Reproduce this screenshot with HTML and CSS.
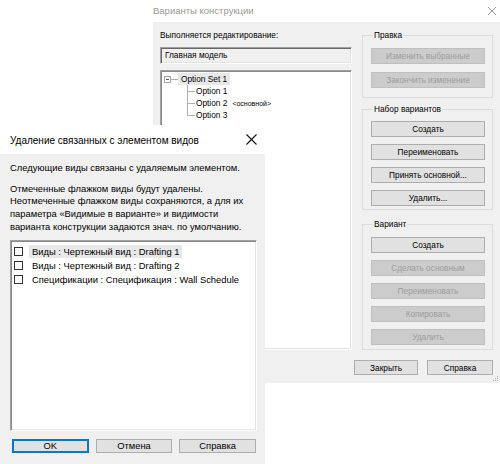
FILE: index.html
```html
<!DOCTYPE html>
<html lang="ru">
<head>
<meta charset="utf-8">
<title>Варианты конструкции</title>
<link rel="stylesheet" href="styles.css">
</head>
<body>
<div class="desk">
  <section class="win back">
    <header class="back-title">
      <span class="back-title-text">Варианты конструкции</span>
      <svg class="back-close" width="10" height="10" viewBox="0 0 10 10"><path d="M1 1L9 9M9 1L1 9" stroke="#9a9a9a" stroke-width="1"/></svg>
    </header>
    <div class="back-body">
      <div class="back-main">
        <div class="left-col">
          <div class="lbl">Выполняется редактирование:</div>
          <div class="field">Главная модель</div>
          <div class="tree">
            <div class="tree-row">
              <span class="expander"></span><span class="stub"></span><span class="node sel">Option Set 1</span>
            </div>
            <div class="tree-children">
              <div class="tree-row"><span class="branch"></span><span class="node">Option 1</span></div>
              <div class="tree-row"><span class="branch"></span><span class="node">Option 2<span class="primary">&lt;основной&gt;</span></span></div>
              <div class="tree-row last"><span class="branch"></span><span class="node">Option 3</span></div>
            </div>
          </div>
        </div>
        <div class="right-col">
          <fieldset class="grp grp-edit">
            <legend>Правка</legend>
            <div class="grp-btns">
              <button class="btn dis">Изменить выбранные</button>
              <button class="btn dis">Закончить изменение</button>
            </div>
          </fieldset>
          <fieldset class="grp grp-set">
            <legend>Набор вариантов</legend>
            <div class="grp-btns">
              <button class="btn">Создать</button>
              <button class="btn">Переименовать</button>
              <button class="btn">Принять основной...</button>
              <button class="btn">Удалить...</button>
            </div>
          </fieldset>
          <fieldset class="grp grp-opt">
            <legend>Вариант</legend>
            <div class="grp-btns">
              <button class="btn">Создать</button>
              <button class="btn dis">Сделать основным</button>
              <button class="btn dis">Переименовать</button>
              <button class="btn dis">Копировать</button>
              <button class="btn dis">Удалить</button>
            </div>
          </fieldset>
        </div>
      </div>
      <div class="back-foot">
        <button class="btn foot-close">Закрыть</button>
        <button class="btn foot-help">Справка</button>
      </div>
      <svg class="grip" width="6" height="6" viewBox="0 0 6 6">
        <rect x="4" y="0" width="1" height="1" fill="#b5b5b5"/>
        <rect x="2" y="2" width="1" height="1" fill="#b5b5b5"/>
        <rect x="4" y="2" width="1" height="1" fill="#b5b5b5"/>
        <rect x="0" y="4" width="1" height="1" fill="#b5b5b5"/>
        <rect x="2" y="4" width="1" height="1" fill="#b5b5b5"/>
        <rect x="4" y="4" width="1" height="1" fill="#b5b5b5"/>
      </svg>
    </div>
  </section>

  <section class="win front">
    <header class="front-title">
      <span class="front-title-text">Удаление связанных с элементом видов</span>
      <svg class="front-close" width="11" height="11" viewBox="0 0 11 11"><path d="M0.5 0.5L10.5 10.5M10.5 0.5L0.5 10.5" stroke="#111" stroke-width="1.1"/></svg>
    </header>
    <div class="front-body">
      <p class="msg1">Следующие виды связаны с удаляемым элементом.</p>
      <p class="msg2">Отмеченные флажком виды будут удалены.<br>Неотмеченные флажком виды сохраняются, а для их<br>параметра «Видимые в варианте» и видимости<br>варианта конструкции задаются знач. по умолчанию.</p>
      <div class="listbox">
        <div class="item"><span class="cb"></span><span class="item-text sel">Виды : Чертежный вид : Drafting 1</span></div>
        <div class="item"><span class="cb"></span><span class="item-text">Виды : Чертежный вид : Drafting 2</span></div>
        <div class="item"><span class="cb"></span><span class="item-text">Спецификации : Спецификация : Wall Schedule</span></div>
      </div>
      <div class="front-btns">
        <button class="btn fbtn ok">OK</button>
        <button class="btn fbtn">Отмена</button>
        <button class="btn fbtn">Справка</button>
      </div>
    </div>
  </section>
</div>
</body>
</html>
```

FILE: styles.css
```css
html, body {
  margin: 0;
  padding: 0;
  background: #ffffff;
}
body {
  font-family: "Liberation Sans", Arial, sans-serif;
  color: #000;
}
.desk {
  position: relative;
  width: 500px;
  height: 464px;
  overflow: hidden;
  background: #ffffff;
}
.win {
  position: absolute;
  display: flex;
  flex-direction: column;
  box-sizing: border-box;
}

/* ---------- back window ---------- */
.back {
  left: 153px;
  top: 0;
  width: 347px;
  height: 383px;
}
.back-title {
  height: 22px;
  flex: none;
  display: flex;
  align-items: center;
  justify-content: space-between;
  background: #fff;
  padding: 0 3px 0 0;
}
.back-title-text {
  font-size: 9.5px;
  color: #9a9a9a;
  margin-top: -1px;
}
.back-close {
  display: block;
  margin-top: -1px;
}
.back-body {
  flex: 1;
  position: relative;
  background: #f0f0f0;
  font-size: 8.3px;
  padding: 8px 7px 0 7px;
  display: flex;
  flex-direction: column;
}
.back-main {
  display: flex;
  gap: 10px;
}
.left-col {
  width: 192px;
  display: flex;
  flex-direction: column;
}
.lbl {
  line-height: 10px;
  height: 10px;
}
.field {
  margin-top: 7px;
  height: 17px;
  box-sizing: border-box;
  background: #f0f0f0;
  border-top: 1px solid #a0a0a0;
  border-left: 1px solid #a0a0a0;
  border-right: 1px solid #ffffff;
  border-bottom: 1px solid #ffffff;
  box-shadow: inset 1px 1px 0 #696969, inset -1px -1px 0 #e3e3e3;
  line-height: 15px;
  padding-left: 4px;
}
.tree {
  margin-top: 6px;
  height: 280px;
  box-sizing: border-box;
  background: #fff;
  border-top: 1px solid #a0a0a0;
  border-left: 1px solid #a0a0a0;
  border-right: 1px solid #ffffff;
  border-bottom: 1px solid #ffffff;
  box-shadow: inset 1px 1px 0 #8a8a8a, inset -1px -1px 0 #e3e3e3;
  padding: 2px 2px 0 3px;
}
.tree-row {
  display: flex;
  align-items: center;
  height: 12px;
  line-height: 12px;
}
.expander {
  width: 7px;
  height: 7px;
  box-sizing: border-box;
  border: 1px solid #a5a5a5;
  background: linear-gradient(#5a5a5a, #5a5a5a) center / 3px 1px no-repeat #fff;
  flex: none;
}
.stub {
  width: 7px;
  height: 12px;
  background: linear-gradient(#b0b0b0, #b0b0b0) 0 6px / 100% 1px no-repeat;
  flex: none;
}
.node {
  padding: 0 3px;
  white-space: nowrap;
}
.node.sel {
  background: #e8e8e8;
}
.primary {
  font-size: 7px;
  margin-left: 5px;
}
.tree-children {
  margin-left: 23px;
}
.branch {
  width: 8px;
  height: 12px;
  flex: none;
  background:
    linear-gradient(#b0b0b0, #b0b0b0) 0 0 / 1px 100% no-repeat,
    linear-gradient(#b0b0b0, #b0b0b0) 0 6px / 8px 1px no-repeat;
}
.tree-row.last .branch {
  background-size: 1px 7px, 8px 1px;
}
.tree-children .node {
  padding-left: 1px;
}

.right-col {
  width: 131px;
  display: flex;
  flex-direction: column;
}
.grp {
  margin: 0;
  padding: 0 7px 0 8px;
  border: 1px solid #dcdcdc;
  min-width: 0;
}
.grp legend {
  padding: 0 1px;
  margin-left: 2px;
  line-height: 10px;
  font-size: 8.3px;
}
.grp-btns {
  display: flex;
  flex-direction: column;
  gap: 7px;
}
.grp-edit .grp-btns {
  padding: 8px 0 9px;
  gap: 8px;
}
.grp-set {
  margin-top: 6px;
}
.grp-set .grp-btns {
  padding: 7px 0 3px;
}
.grp-opt {
  margin-top: 9px;
}
.grp-opt .grp-btns {
  padding: 8px 0 4px;
}
.btn {
  font-family: inherit;
  font-size: 8.3px;
  color: #000;
  background: #e1e1e1;
  border: 1px solid #adadad;
  height: 16px;
  padding: 0;
  margin: 0;
  box-sizing: border-box;
  line-height: 14px;
  text-align: center;
  white-space: nowrap;
}
.btn.dis {
  background: #cccccc;
  border-color: #bfbfbf;
  color: #9c9c9c;
}
.back-foot {
  display: flex;
  justify-content: flex-end;
  gap: 9px;
  margin-top: 10px;
}
.foot-close {
  width: 64px;
  height: 15px;
}
.foot-help {
  width: 66px;
  height: 15px;
}
.grip {
  position: absolute;
  right: 1px;
  bottom: 1px;
}

/* ---------- front window ---------- */
.front {
  left: 0;
  top: 125px;
  width: 265px;
  height: 339px;
}
.front-title {
  height: 29px;
  flex: none;
  background: #fff;
  display: flex;
  align-items: center;
  justify-content: space-between;
  padding: 0 8px 0 10px;
}
.front-title-text {
  font-size: 10px;
  margin-top: 2px;
}
.front-close {
  display: block;
  margin-top: 0;
}
.front-body {
  flex: 1;
  background: #f0f0f0;
  font-size: 9.4px;
  padding: 8px 8px 0 10px;
  display: flex;
  flex-direction: column;
}
.msg1 {
  margin: 0;
  line-height: 12.5px;
}
.msg2 {
  margin: 8px 0 0;
  line-height: 12.7px;
}
.listbox {
  margin-top: 7px;
  height: 191px;
  flex: none;
  box-sizing: border-box;
  background: #fff;
  border-top: 1px solid #a0a0a0;
  border-left: 1px solid #a0a0a0;
  border-right: 1px solid #ffffff;
  border-bottom: 1px solid #ffffff;
  box-shadow: inset 1px 1px 0 #8a8a8a, inset -1px -1px 0 #e3e3e3;
  padding: 3px 2px 0 3px;
}
.item {
  display: flex;
  align-items: center;
  height: 14px;
}
.cb {
  width: 9px;
  height: 9px;
  box-sizing: border-box;
  border: 1px solid #333;
  background: #fff;
  flex: none;
  margin-right: 6px;
}
.item-text {
  padding: 0 3px;
  line-height: 13px;
  white-space: nowrap;
}
.item-text.sel {
  background: #e8e8e8;
}
.front-btns {
  margin-top: 8px;
  display: flex;
  gap: 7px;
  padding: 0 1px 0 2px;
}
.fbtn {
  flex: 1;
  height: 14px;
  line-height: 12px;
  font-size: 9.4px;
}
.fbtn.ok {
  border-color: #0078d7;
  box-shadow: inset 0 0 0 1px #0078d7;
}
```
